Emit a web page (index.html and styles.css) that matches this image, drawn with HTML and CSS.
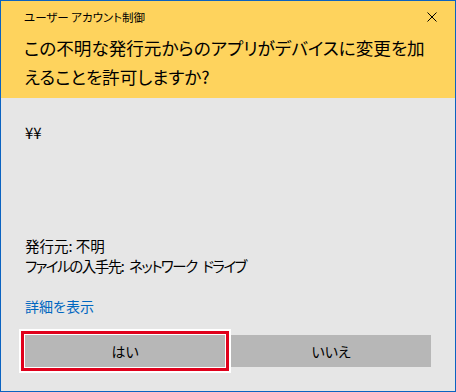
FILE: index.html
```html
<!DOCTYPE html>
<html lang="ja">
<head>
<meta charset="utf-8">
<link rel="stylesheet" href="styles.css">
</head>
<body>
<div class="dialog">
  <div class="header">
    <div class="titlebar">
      <span class="title">ユーザー アカウント制御</span>
      <svg class="close" width="10" height="10" viewBox="0 0 10 10"><path d="M0.5 0.5 L9.5 9.5 M9.5 0.5 L0.5 9.5" stroke="#000" stroke-width="1" fill="none"/></svg>
    </div>
    <div class="headline">この不明な発行元からのアプリがデバイスに変更を加<br>えることを許可しますか?</div>
  </div>
  <div class="body">
    <div class="program">¥¥</div>
    <div class="info">
      <div class="line">発行元: 不明</div>
      <div class="line tight">ファイルの入手先:&ensp;ネットワーク&ensp;ドライブ</div>
    </div>
    <div class="link">詳細を表示</div>
    <div class="buttons">
      <div class="btn focused">はい</div>
      <div class="btn">いいえ</div>
    </div>
  </div>
</div>
</body>
</html>
```
FILE: styles.css
```css
html, body {
  margin: 0;
  padding: 0;
}
body {
  font-family: "Noto Sans CJK JP", "Noto Sans", sans-serif;
  font-feature-settings: "palt";
  color: #000;
}
.dialog {
  width: 456px;
  height: 392px;
  box-sizing: border-box;
  border: 1px solid #0b63c1;
  background: #e6e6e6;
  display: flex;
  flex-direction: column;
}
.header {
  background: #fed35d;
  height: 97px;
  box-sizing: border-box;
  padding: 0 18px 0 23px;
}
.titlebar {
  height: 32px;
  display: flex;
  align-items: center;
  justify-content: space-between;
}
.title {
  font-size: 11.5px;
  line-height: 32px;
}
.close {
  display: block;
}
.headline {
  font-size: 17.6px;
  line-height: 29px;
}
.body {
  padding: 25px 24px 0 24px;
  display: flex;
  flex-direction: column;
}
.program {
  font-size: 15px;
  line-height: 20px;
}
.info {
  margin-top: 93px;
  font-size: 14.5px;
  line-height: 20px;
}
.tight {
  letter-spacing: -1.5px;
}
.link {
  margin-top: 20px;
  font-size: 14px;
  line-height: 20px;
  color: #0067c0;
}
.buttons {
  margin-top: 19px;
  display: grid;
  grid-template-columns: 1fr 1fr;
  gap: 6px;
}
.btn {
  height: 32px;
  background: #b7b7b7;
  font-size: 14px;
  line-height: 32px;
  text-align: center;
}
.btn.focused {
  box-shadow: 0 0 0 1px #fff, 0 0 0 4px #e0001b, 0 0 0 6px #fff;
}
```
